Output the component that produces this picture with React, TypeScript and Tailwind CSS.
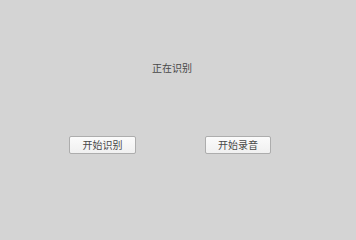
export default function App() {
  return (
    <div
      className="flex h-screen min-h-[200px] w-full flex-col bg-[#d4d4d4] text-[#484848]"
      style={{ fontFamily: '"Noto Sans CJK SC", "Noto Sans", sans-serif' }}
    >
      <div className="pl-[152px] pt-[61px] text-[10px] leading-[14px]">正在识别</div>
      <div className="mt-[61px] flex pl-[69px]">
        <button className="h-[18px] w-[67px] rounded-[2px] border border-[#adadad] bg-gradient-to-b from-[#fbfbfb] to-[#f0f0f0] text-[10px] leading-[16px] text-[#484848]">
          开始识别
        </button>
        <button className="ml-[69px] h-[18px] w-[66px] rounded-[2px] border border-[#adadad] bg-gradient-to-b from-[#fbfbfb] to-[#f0f0f0] text-[10px] leading-[16px] text-[#484848]">
          开始录音
        </button>
      </div>
    </div>
  );
}
